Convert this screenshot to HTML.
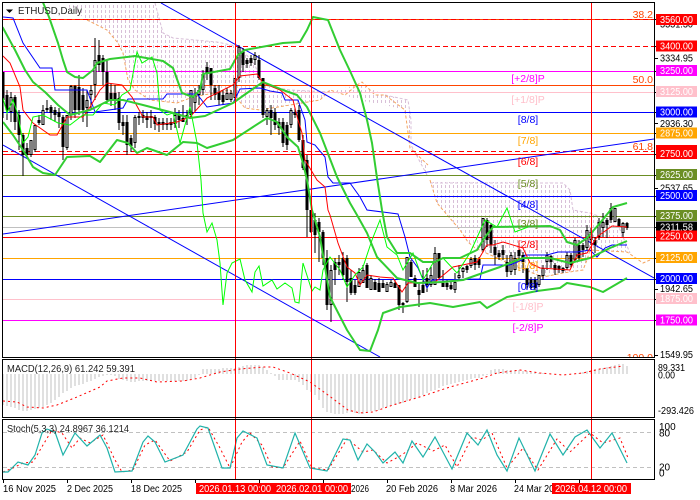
<!DOCTYPE html>
<html><head><meta charset="utf-8"><style>
html,body{margin:0;padding:0;background:#fff;width:700px;height:500px;overflow:hidden}
svg{display:block}
text{font-family:"Liberation Sans",sans-serif;font-size:10.5px}
.a{font-size:10px}
</style></head><body>
<svg width="700" height="500" viewBox="0 0 700 500" xmlns="http://www.w3.org/2000/svg">
<defs>
<pattern id="c" width="4" height="5" patternUnits="userSpaceOnUse"><rect x="1" y="0" width="1" height="3" fill="#d8bfd8"/></pattern>
<clipPath id="m"><rect x="3" y="3" width="651" height="354"/></clipPath>
</defs>
<rect width="700" height="500" fill="#fff"/>
<g clip-path="url(#m)">
<!-- cloud -->
<g fill="url(#c)">
<path d="M63 3H155L163 33 173 38 217 42 240 47 255 65 262 85 290 90 330 92 360 84 385 95 408 100 411 120 411 145 427 175 428 165 410 148 405 110 385 105 357 100 345 95 330 90 320 100 290 105 260 110 245 108 230 90 193 97 177 103 150 100 135 90 128 80 123 53 118 43 107 30 87 20Z"/>
<path d="M430 182H517L563 183 570 190 573 210 590 213 617 223 630 253 627 252 590 250 587 260 583 270 563 273 543 277 517 267 475 248 468 242 460 230 437 203Z"/>
</g>
<g fill="none" stroke-dasharray="3 2" stroke-width="1">
<path stroke="#d8bfd8" d="M155 3L163 33 173 38 217 42 240 47 255 65 262 85 290 90 330 92M385 95L408 100 411 120 411 145 427 175M430 183H517L563 183 570 190 573 210 590 213 617 223 630 253"/>
<path stroke="#f4a460" d="M87 20L107 30 118 43 123 53 128 80 135 90 150 100 177 103 193 97 230 90 245 108 260 110 290 105 320 100 330 90 345 95 357 85 362 82 375 95 385 95 405 110 410 148 428 165M430 180L437 203 460 230 468 242 475 248 517 267 543 277 563 273 583 270 587 260 590 250 627 252 643 263 650 260"/>
</g>
<!-- horizontals -->
<g stroke-width="1" fill="none" shape-rendering="crispEdges">
<path stroke="#ff4500" d="M3 19.5H654"/>
<path stroke="#f00" stroke-dasharray="5 3" d="M3 46.5H654M3 19.5H654M3 151.5H654"/>
<path stroke="#f0f" d="M3 71.5H654M3 320.5H654"/>
<path stroke="#ff4500" d="M3 85.5H654"/>
<path stroke="#ffc0cb" d="M3 92.5H654M3 299.5H654"/>
<path stroke="#00f" d="M3 112.5H654M3 196.5H654M3 279.5H654"/>
<path stroke="#ffa500" d="M3 133.5H654M3 258.5H654"/>
<path stroke="#f00" d="M3 154.5H654M3 237.5H654"/>
<path stroke="#6b8e23" d="M3 175.5H654M3 216.5H654"/>
<path stroke="#c0c0c0" d="M3 227.5H654"/>
</g>
<!-- trend lines -->
<g stroke="#00f" stroke-width="1" fill="none">
<path d="M161 3L654 278"/>
<path d="M3 145L380 357"/>
<path d="M3 234L654 139"/>
</g>
<!-- candles wicks -->
<path fill="none" stroke="#000" stroke-width="1" shape-rendering="crispEdges" d="M3 72V118M7 90V120M11 92V122M15 95V130M19 110V150M23 133V176M27 143V156M31 140V157M35 125V152M39 115V125M43 105V125M47 100V112M51 105V120M55 107V122M59 108V128M63 115V160M67 115V150M71 85V120M75 85V118M79 75V115M83 88V122M87 90V127M91 85V110M95 38V100M99 40V72M103 55V85M107 60V103M111 83V106M115 85V110M119 92V130M123 115V135M127 115V155M131 135V152M135 115V148M139 112V125M143 110V123M147 112V128M151 110V128M155 115V130M159 118V132M163 118V130M167 118V130M171 118V130M175 108V128M179 110V128M183 105V120M187 110V125M191 90V118M195 88V112M199 85V105M203 70V95M207 62V80M211 68V100M215 85V100M219 85V105M223 90V105M227 88V100M231 90V102M235 78V100M239 45V82M243 48V72M247 58V68M251 55V66M255 52V65M259 55V80M263 78V118M267 108V125M271 105V135M275 108V130M279 118V135M283 118V147M287 122V150M291 108V128M295 108V118M299 105V142M303 135V170M307 155V237M311 210V233M315 213V253M319 218V262M323 230V265M327 250V310M331 265V322M335 258V285M339 255V275M343 252V280M347 255V302M351 270V295M355 280V295M359 268V287M363 265V283M367 263V288M371 275V290M375 279V290M379 278V292M383 280V288M387 282V292M391 280V287M395 280V288M399 285V310M403 302V313M407 257V303M411 260V277M415 275V287M419 283V307M423 270V293M427 268V292M431 267V287M435 247V285M439 253V278M443 270V287M447 280V290M451 282V290M455 273V293M459 265V280M463 267V278M467 265V273M471 257V268M475 255V270M479 257V268M483 218V252M487 218V247M491 223V253M495 240V265M499 250V260M503 245V260M507 255V277M511 252V275M515 252V275M519 243V260M523 252V273M527 268V290M531 277V290M535 277V290M539 275V287M543 265V280M547 252V270M551 255V268M555 263V275M559 265V273M563 267V273M567 252V270M571 253V268M575 238V262M579 240V260M583 243V257M587 225V250M591 228V245M595 237V253M599 218V240M603 213V237M607 218V238M611 203V223M615 208V222M619 218V227M623 222V237M627 222V230"/>
<path fill="none" stroke="#000" stroke-width="3" shape-rendering="crispEdges" d="M3 72V100M7 95V110M11 97V112M15 97V122M19 115V135M23 135V155M27 148V155M31 140V155M35 125V150M39 120V123M43 110V125M47 108V110M51 107V113M55 110V115M59 112V117M63 117V147M67 115V148M71 86V115M75 86V110M79 87V110M83 95V110M87 100V108M91 90V95M95 60V85M99 55V65M103 58V72M107 72V100M111 93V100M115 93V100M119 98V123M123 122V126M127 122V145M131 138V146M135 117V143M139 116V118M143 115V118M147 116V120M151 116V118M155 117V124M159 122V125M163 122V125M167 123V125M171 122V125M175 115V124M179 115V120M183 118V122M187 115V118M191 90V115M195 95V103M199 90V95M203 74V90M207 67V74M211 68V85M215 88V95M219 92V100M223 95V102M227 93V100M231 93V100M235 78V98M239 47V78M243 52V65M247 60V64M251 58V63M255 55V60M259 60V78M263 78V115M267 110V117M271 110V118M275 112V125M279 122V128M283 122V143M287 125V145M291 110V125M295 112V115M299 110V140M303 140V168M307 160V210M311 210V232M315 220V235M319 222V232M323 232V258M327 258V305M331 270V305M335 262V270M339 262V265M343 258V275M347 258V282M351 278V293M355 285V293M359 272V287M363 270V283M367 265V288M371 278V290M375 282V290M379 283V292M383 283V288M387 284V292M391 282V287M395 283V288M399 285V305M403 303V305M407 257V302M411 262V277M415 278V287M419 290V295M423 285V293M427 278V285M431 275V285M435 253V285M439 253V278M443 283V287M447 283V287M451 285V289M455 282V290M459 275V278M463 268V272M467 266V270M471 259V266M475 258V265M479 259V265M483 218V250M487 220V240M491 225V245M495 247V255M499 253V257M503 250V255M507 262V272M511 255V272M515 258V270M519 250V256M523 255V262M527 268V285M531 280V288M535 280V288M539 275V285M543 268V276M547 255V262M551 256V262M555 265V270M559 266V270M563 268V271M567 255V268M571 255V265M575 240V260M579 245V258M583 245V250M587 230V248M591 232V240M595 240V245M599 222V237M603 222V228M607 220V225M611 208V220M615 208V222M619 219V226M623 223V233M627 223V228"/>
<path fill="none" stroke="#fff" stroke-width="1" shape-rendering="crispEdges" d="M11 98V111M31 141V154M35 126V149M43 111V124M67 116V147M71 87V114M87 101V107M91 91V94M95 61V84M135 118V142M175 116V123M191 91V114M195 96V102M199 91V94M203 75V89M227 94V99M231 94V99M235 79V97M239 48V77M255 56V59M267 111V116M291 111V124M331 271V304M359 273V286M363 271V282M371 279V289M387 285V291M391 283V286M407 258V301M431 276V284M435 254V284M455 283V289M459 276V277M463 269V271M471 260V265M483 219V249M511 256V271M515 259V269M539 276V284M543 269V275M547 256V261M567 256V267M575 241V259M587 231V247M591 233V239M599 223V236M603 223V227M615 209V221M623 224V232"/>
<!-- blue step -->
<path fill="none" stroke="#00f" d="M3 17L13 18 23 43 40 68H52L55 90H87L95 112 123 108 128 99H163L167 94H197L207 107 233 103 240 89 260 88 270 91 282 93 285 100H298L305 120 307 142 315 145 325 157 328 177 333 183H350L360 197 367 210 398 214 405 237 410 257 418 268 427 288 432 280 480 279 483 265H510L522 260 525 255H547L558 252H577L590 250 597 257 605 248 612 245H627"/>
<!-- red -->
<path fill="none" stroke="#f00" d="M3 56L10 63 20 87 23 110 33 123 50 135H57L67 117H83L90 107 100 90 107 83 122 85 132 97 143 117H153L157 125 177 122 190 117 207 98 233 85 240 76 257 74 263 83 280 90 293 100 298 120 302 133 305 160 317 180 325 187 328 210 330 215 338 243 347 267 355 273 360 285 367 275 380 277 393 278 402 292 408 283 435 282 453 267 477 262 487 245 493 245 503 242 523 248 530 263 540 268 570 270 577 255 587 253 597 237 612 226 627 227"/>
<!-- lime -->
<path fill="none" stroke="#0f0" d="M3 98L7 113 13 100 18 115 23 143 28 137 33 117 43 115 58 123 70 125 83 115H93L103 103 115 105 122 95 130 90 137 52 142 63 152 57 157 73 160 110 167 115 173 113 180 143 190 107 197 143 201 180 203 213 207 232 212 223 217 240 220 263 223 305 227 273 232 263 240 259 245 280 252 292 255 272 259 266 263 286 272 280 277 289 285 283 292 288 295 302 299 303 303 263 312 291 315 287 320 290 323 270 330 257 340 270 347 287 355 275 363 267 372 240 380 220 387 247 397 255 403 270 413 253 423 280 433 263 443 258 457 273 470 253 485 220 497 227 507 208 515 232 528 227"/>
<!-- bollinger -->
<g fill="none" stroke="#32cd32" stroke-width="2" stroke-linejoin="round">
<path d="M42 0L49 17 58 43 63 60 67 72 75 77 83 78 93 70 97 63 110 59 135 56 163 61 173 68 182 93 193 97 200 90 203 74 230 69 238 55 245 50 283 43 300 42 307 30 313 17 328 20 340 50 350 71 360 93 367 120 372 143 377 178 382 210 387 237 397 253 410 253 423 262 435 262 443 258 460 258 477 250 485 237 493 227 550 226 560 230 567 242 577 245 587 238 600 223 613 207 627 203"/>
<path d="M0 24L3 28 15 50 20 60 25 70 33 82 45 92 58 105 70 115 90 110 100 105 110 100 123 100 143 105 170 112 190 118 205 116 233 103 247 93 263 82 283 90 297 95 307 107 320 133 337 177 350 203 357 215 367 233 377 257 397 278 417 283 443 282 463 280 477 275 500 267 523 258H550L570 263 590 258 610 248 627 241"/>
<path d="M3 122L13 135 23 150 33 167 43 173 55 175 67 157 90 156 100 162 117 140 128 143 137 153 147 148 167 155 183 142 197 143 207 148 233 140 253 127 267 118 277 122 287 137 298 147 303 163 307 180 312 210 320 237 330 297 347 330 360 350 370 351 378 330 383 313 400 307 430 303 453 307 480 302 487 308 507 297 537 291 560 288 567 283 590 287 603 292 627 278"/>
</g>
<!-- labels -->
<text x="18" y="14" fill="#222" textLength="64" lengthAdjust="spacingAndGlyphs">ETHUSD,Daily</text>
<g text-anchor="middle">
<text x="528" y="82" fill="#f0f">[+2/8]P</text>
<text x="528" y="103" fill="#ffc0cb">[+1/8]P</text>
<text x="528" y="123" fill="#00f">[8/8]</text>
<text x="528" y="144" fill="#ffa500">[7/8]</text>
<text x="528" y="165" fill="#f00">[6/8]</text>
<text x="528" y="187" fill="#6b8e23">[5/8]</text>
<text x="528" y="208" fill="#00f">[4/8]</text>
<text x="528" y="227" fill="#6b8e23">[3/8]</text>
<text x="528" y="248" fill="#f00">[2/8]</text>
<text x="528" y="269" fill="#ffa500">[1/8]</text>
<text x="528" y="290" fill="#00f">[0/8]</text>
<text x="528" y="310" fill="#ffc0cb">[-1/8]P</text>
<text x="528" y="331" fill="#f0f">[-2/8]P</text>
</g>
<g fill="#ff4500" text-anchor="end">
<text x="653" y="18">38.2</text>
<text x="653" y="83">50.0</text>
<text x="653" y="150">61.8</text>
<text x="653" y="361">100.0</text>
</g>
</g>
<path d="M6 9.5H13L9.5 13Z" fill="#000"/>
<!-- MACD -->
<path fill="none" stroke="#c0c0c0" stroke-width="1" shape-rendering="crispEdges" d="M3 374V405M7 374V406M11 374V407M15 374V408M19 374V410M23 374V411M27 374V411M31 374V410M35 374V409M39 374V408M43 374V407M47 374V405M51 374V403M55 374V400M59 374V397M63 374V393M67 374V391M71 374V388M75 374V386M79 374V385M83 374V384M87 374V382M91 374V381M95 374V379M99 374V377M103 374V376M107 374V375M111 374V375M115 374V376M119 374V379M123 374V380M127 374V381M131 374V382M135 374V382M139 374V381M143 374V381M147 374V381M151 374V381M155 374V381M159 374V381M163 374V381M167 374V381M171 374V381M175 374V381M179 374V381M183 374V381M187 374V381M191 374V380M195 374V378M199 374V375M203 374V369M207 374V369M211 374V369M215 374V369M219 374V369M223 374V368M227 374V368M231 374V368M235 374V368M239 374V367M243 374V366M247 374V365M251 374V365M255 374V365M259 374V365M263 374V367M267 374V370M271 374V373M275 374V376M279 374V380M283 374V380M287 374V380M291 374V380M295 374V380M299 374V382M303 374V385M307 374V390M311 374V392M315 374V395M319 374V400M323 374V408M327 374V412M331 374V413M335 374V414M339 374V414M343 374V414M347 374V413M351 374V412M355 374V413M359 374V414M363 374V414M367 374V413M371 374V411M375 374V411M379 374V410M383 374V408M387 374V407M391 374V406M395 374V405M399 374V404M403 374V403M407 374V401M411 374V399M415 374V398M419 374V397M423 374V395M427 374V393M431 374V391M435 374V390M439 374V388M443 374V386M447 374V385M451 374V384M455 374V383M459 374V382M463 374V381M467 374V380M471 374V379M475 374V378M479 374V378M483 374V376M487 374V375M491 374V370M495 374V369M499 374V369M503 374V369M507 374V370M511 374V370M515 374V370M519 374V370M523 374V371M527 374V371M531 374V372M535 374V372M539 374V373M543 374V373M547 374V374M575 374V374M579 374V373M583 374V372M587 374V371M591 374V370M595 374V369M599 374V369M603 374V368M607 374V367M611 374V366M615 374V365M619 374V364M623 374V364M627 374V366"/>
<path fill="none" stroke="#f00" stroke-dasharray="2 3" d="M3 401L17 402 27 407 43 408 57 405 77 397 100 387 107 381 123 378 140 378 157 382 183 381 200 378 220 372 240 369 263 367 273 367 290 373 310 382 328 395 348 410 360 413 373 412 393 405 423 396 450 387 483 378 497 373 520 370 540 373 563 375 583 373 600 369 623 366"/>
<!-- Stoch -->
<path fill="none" stroke="#c0c0c0" stroke-dasharray="4 3" shape-rendering="crispEdges" d="M3 432.5H654M3 467.5H654"/>
<path fill="none" stroke="#f00" stroke-width="1" stroke-dasharray="2 3" d="M3 472L13 468 23 463 33 462 43 445 52 430 62 433 72 448 80 438 90 443 103 435 115 460 122 472 133 470 145 445 155 440 170 461 187 452 200 430 208 427 220 448 230 468 242 442 250 433 262 445 272 467 283 468 300 441 312 468 328 470 347 439 350 441 363 452 373 450 387 463 402 455 417 443 433 451 445 445 457 467 472 437 482 440 492 433 507 468 523 448 538 470 557 439 570 452 590 433 603 443 620 438 628 458"/>
<path fill="none" stroke="#20b2aa" stroke-width="1.2" d="M3 472L8 472 18 462 28 465 35 455 42 433 47 429 55 432 63 455 75 433 87 446 100 435 107 448 115 472 132 471 143 442 148 436 155 442 165 462 183 455 197 429 200 426 208 428 222 468 230 468 237 438 243 431 257 438 267 465 283 468 295 433 310 468 327 471 343 439 350 440 358 460 367 444 375 452 383 463 395 452 403 463 412 441 423 457 435 437 452 469 467 433 478 445 487 430 497 455 507 471 519 438 535 471 550 434 563 455 575 437 587 430 600 448 612 433 627 463"/>
<!-- vertical red across all panels -->
<path fill="none" stroke="#f00" shape-rendering="crispEdges" d="M235.5 3V479M311.5 3V479M591.5 3V479"/>
<!-- frames -->
<g fill="none" stroke="#000" shape-rendering="crispEdges">
<path d="M2.5 2.5H654.5V357.5H2.5Z"/>
<path d="M2.5 359.5H654.5V417.5H2.5Z"/>
<path d="M2.5 419.5H654.5V479.5H2.5Z"/>
<path d="M654.5 19.5H658M654.5 46.5H658M654.5 58.5H658M654.5 71.5H658M654.5 92.5H658M654.5 112.5H658M654.5 123.5H658M654.5 133.5H658M654.5 154.5H658M654.5 175.5H658M654.5 188.5H658M654.5 196.5H658M654.5 216.5H658M654.5 227.5H658M654.5 237.5H658M654.5 258.5H658M654.5 279.5H658M654.5 289.5H658M654.5 299.5H658M654.5 320.5H658M654.5 355.5H658"/>
<path d="M3.5 479V483M67.5 479V483M131.5 479V483M195.5 479V483M259.5 479V483M323.5 479V483M387.5 479V483M451.5 479V483M515.5 479V483M579.5 479V483"/>
</g>
<text x="7" y="372" fill="#222" textLength="128" lengthAdjust="spacingAndGlyphs">MACD(12,26,9) 61.242 59.391</text>
<text x="7" y="432" fill="#222" textLength="122" lengthAdjust="spacingAndGlyphs">Stoch(5,3,3) 24.8967 36.1214</text>
<!-- axis labels -->
<g class="a" fill="#000">
<text class="a" x="660" y="27.5" textLength="33" lengthAdjust="spacingAndGlyphs">3331.30</text>
<text class="a" x="660" y="61.5" textLength="33" lengthAdjust="spacingAndGlyphs">3334.95</text>
<text class="a" x="660" y="127" textLength="33" lengthAdjust="spacingAndGlyphs">2936.30</text>
<text class="a" x="660" y="191.5" textLength="33" lengthAdjust="spacingAndGlyphs">2537.65</text>
<text class="a" x="660" y="292" textLength="33" lengthAdjust="spacingAndGlyphs">1942.65</text>
<text class="a" x="660" y="358" textLength="33" lengthAdjust="spacingAndGlyphs">1549.95</text>
</g>
<g>
<rect x="656" y="14" width="41" height="11" fill="#f00"/>
<rect x="656" y="40.5" width="41" height="11" fill="#f00"/>
<rect x="656" y="65" width="41" height="11" fill="#f0f"/>
<rect x="656" y="86" width="41" height="11" fill="#ffc0cb"/>
<rect x="656" y="106.5" width="41" height="11" fill="#00f"/>
<rect x="656" y="127.5" width="41" height="11" fill="#ffa500"/>
<rect x="656" y="145" width="41" height="14" fill="#f00"/>
<rect x="656" y="169" width="41" height="11" fill="#6b8e23"/>
<rect x="656" y="190" width="41" height="11" fill="#00f"/>
<rect x="656" y="210" width="41" height="11" fill="#6b8e23"/>
<rect x="656" y="221.5" width="41" height="11" fill="#000"/>
<rect x="656" y="230.5" width="41" height="11" fill="#f00"/>
<rect x="656" y="252" width="41" height="11" fill="#ffa500"/>
<rect x="656" y="273" width="41" height="11" fill="#00f"/>
<rect x="656" y="293" width="41" height="11" fill="#ffc0cb"/>
<rect x="656" y="314.5" width="41" height="11" fill="#f0f"/>
</g>
<g fill="#fff">
<text class="a" x="660" y="23" textLength="33" lengthAdjust="spacingAndGlyphs">3560.00</text>
<text class="a" x="660" y="49.5" textLength="33" lengthAdjust="spacingAndGlyphs">3400.00</text>
<text class="a" x="660" y="74" textLength="33" lengthAdjust="spacingAndGlyphs">3250.00</text>
<text class="a" x="660" y="95" textLength="33" lengthAdjust="spacingAndGlyphs">3125.00</text>
<text class="a" x="660" y="115.5" textLength="33" lengthAdjust="spacingAndGlyphs">3000.00</text>
<text class="a" x="660" y="136.5" textLength="33" lengthAdjust="spacingAndGlyphs">2875.00</text>
<text class="a" x="660" y="157" textLength="33" lengthAdjust="spacingAndGlyphs">2750.00</text>
<text class="a" x="660" y="178" textLength="33" lengthAdjust="spacingAndGlyphs">2625.00</text>
<text class="a" x="660" y="199" textLength="33" lengthAdjust="spacingAndGlyphs">2500.00</text>
<text class="a" x="660" y="219" textLength="33" lengthAdjust="spacingAndGlyphs">2375.00</text>
<text class="a" x="660" y="230.5" textLength="33" lengthAdjust="spacingAndGlyphs">2311.58</text>
<text class="a" x="660" y="239.5" textLength="33" lengthAdjust="spacingAndGlyphs">2250.00</text>
<text class="a" x="660" y="261" textLength="33" lengthAdjust="spacingAndGlyphs">2125.00</text>
<text class="a" x="660" y="282" textLength="33" lengthAdjust="spacingAndGlyphs">2000.00</text>
<text class="a" x="660" y="302" textLength="33" lengthAdjust="spacingAndGlyphs">1875.00</text>
<text class="a" x="660" y="323.5" textLength="33" lengthAdjust="spacingAndGlyphs">1750.00</text>
</g>
<g fill="#000">
<text class="a" x="658" y="371" textLength="27" lengthAdjust="spacingAndGlyphs">89.331</text>
<text class="a" x="658" y="378.5" textLength="17" lengthAdjust="spacingAndGlyphs">0.00</text>
<text class="a" x="658" y="414" textLength="36" lengthAdjust="spacingAndGlyphs">-293.426</text>
<text class="a" x="659" y="430">100</text>
<text class="a" x="659" y="436.5">80</text>
<text class="a" x="659" y="470.5">20</text>
<text class="a" x="659" y="476.5">0</text>
</g>
<!-- time axis -->
<g fill="#000">
<text class="a" x="3" y="492" textLength="53" lengthAdjust="spacingAndGlyphs">16 Nov 2025</text>
<text class="a" x="67" y="492" textLength="46" lengthAdjust="spacingAndGlyphs">2 Dec 2025</text>
<text class="a" x="131" y="492" textLength="51" lengthAdjust="spacingAndGlyphs">18 Dec 2025</text>
<text class="a" x="351" y="492" textLength="18" lengthAdjust="spacingAndGlyphs">2026</text>
<text class="a" x="386" y="492" textLength="52" lengthAdjust="spacingAndGlyphs">20 Feb 2026</text>
<text class="a" x="450" y="492" textLength="47" lengthAdjust="spacingAndGlyphs">8 Mar 2026</text>
<text class="a" x="514" y="492" textLength="50" lengthAdjust="spacingAndGlyphs">24 Mar 2026</text>
</g>
<rect x="196" y="483" width="155" height="11" fill="#f00"/>
<rect x="552" y="483" width="79" height="11" fill="#f00"/>
<g fill="#fff">
<text class="a" x="199" y="492" textLength="72" lengthAdjust="spacingAndGlyphs">2026.01.13 00:00</text>
<text class="a" x="276" y="492" textLength="72" lengthAdjust="spacingAndGlyphs">2026.02.01 00:00</text>
<text class="a" x="555" y="492" textLength="72" lengthAdjust="spacingAndGlyphs">2026.04.12 00:00</text>
</g>
</svg>
</body></html>
